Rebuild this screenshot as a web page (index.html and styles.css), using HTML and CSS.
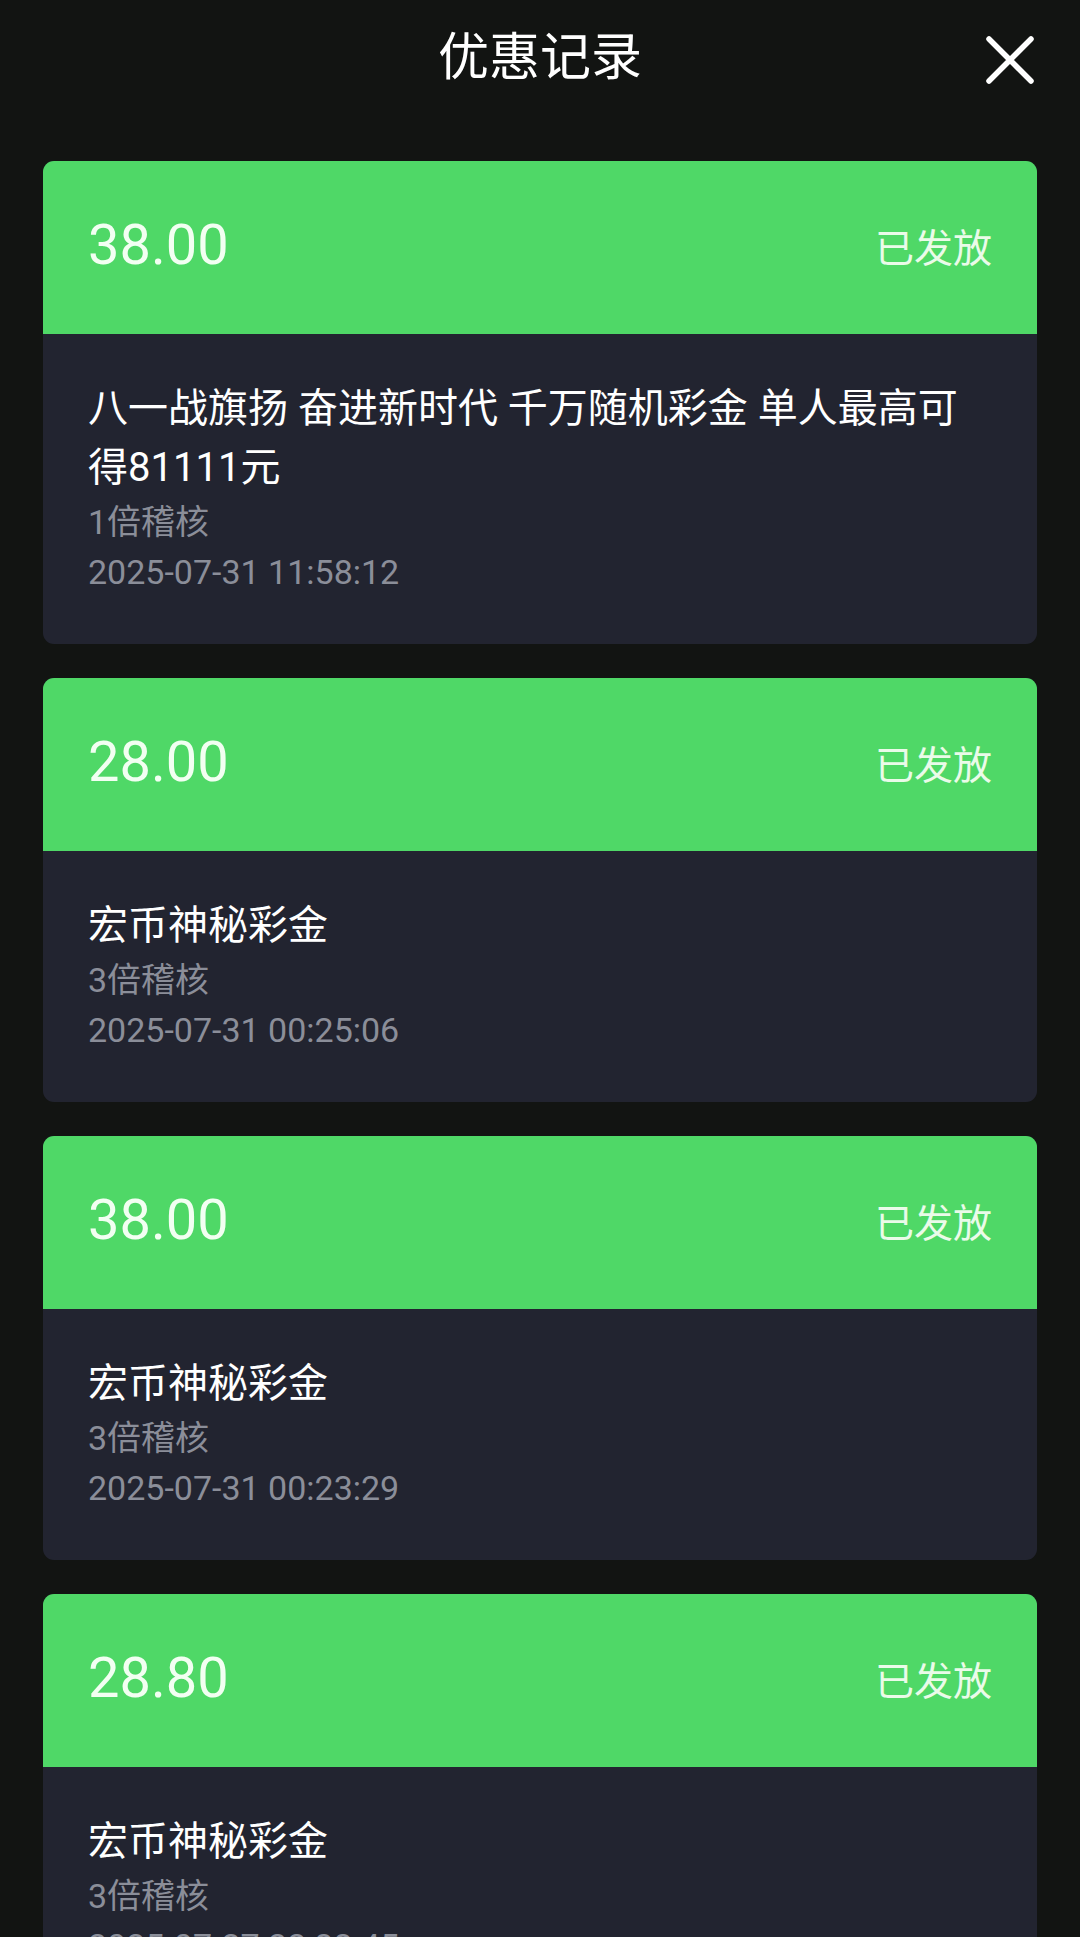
FILE: index.html
```html
<!DOCTYPE html>
<html lang="zh-CN">
<head>
  <meta charset="UTF-8">
  <meta name="viewport" content="width=device-width, initial-scale=1.0">
  <title>优惠记录</title>
  <link rel="stylesheet" href="styles.css">
</head>
<body>
  <!-- 顶部标题栏 -->
  <header class="topbar">
    <h1>优惠记录</h1>
    <button class="close-btn" aria-label="关闭">
      <svg width="48" height="48" viewBox="0 0 48 48">
        <path d="M3 3 L45 45 M45 3 L3 45" stroke="#fff" stroke-width="5.5" stroke-linecap="round" fill="none"/>
      </svg>
    </button>
  </header>

  <!-- 记录列表 -->
  <main class="record-list">
    <div class="record">
      <div class="record-head">
        <span class="amount">38.00</span>
        <span class="status">已发放</span>
      </div>
      <div class="record-body">
        <p class="name">八一战旗扬 奋进新时代 千万随机彩金 单人最高可得81111元</p>
        <p class="meta">1倍稽核</p>
        <p class="meta">2025-07-31 11:58:12</p>
      </div>
    </div>

    <div class="record">
      <div class="record-head">
        <span class="amount">28.00</span>
        <span class="status">已发放</span>
      </div>
      <div class="record-body">
        <p class="name">宏币神秘彩金</p>
        <p class="meta">3倍稽核</p>
        <p class="meta">2025-07-31 00:25:06</p>
      </div>
    </div>

    <div class="record">
      <div class="record-head">
        <span class="amount">38.00</span>
        <span class="status">已发放</span>
      </div>
      <div class="record-body">
        <p class="name">宏币神秘彩金</p>
        <p class="meta">3倍稽核</p>
        <p class="meta">2025-07-31 00:23:29</p>
      </div>
    </div>

    <div class="record">
      <div class="record-head">
        <span class="amount">28.80</span>
        <span class="status">已发放</span>
      </div>
      <div class="record-body">
        <p class="name">宏币神秘彩金</p>
        <p class="meta">3倍稽核</p>
        <p class="meta">2025-07-27 22:33:45</p>
      </div>
    </div>
  </main>
</body>
</html>
```

FILE: styles.css
```css
body {
  margin: 0;
  padding: 0;
  background-color: #121412;
  color: #fff;
  font-family: 'Roboto', 'Noto Sans CJK SC', sans-serif;
  overflow: hidden;
}
.topbar {
  position: relative;
  height: 118px;
  display: flex;
  align-items: center;
  justify-content: center;
}
.topbar h1 {
  margin: -3px 0 0;
  font-size: 51px;
  font-weight: 400;
  line-height: 1;
  color: #fff;
}
.close-btn {
  position: absolute;
  right: 46px;
  top: 36px;
  padding: 0;
  border: none;
  background: none;
  width: 48px;
  height: 48px;
  cursor: pointer;
}
.close-btn svg {
  display: block;
}
.record-list {
  padding: 43px 43px 0;
  display: flex;
  flex-direction: column;
  gap: 34px;
}
.record {
  border-radius: 11px;
  overflow: hidden;
  background-color: #222430;
}
.record-head {
  height: 173px;
  padding: 0 45px;
  background-color: #4fd867;
  display: flex;
  align-items: center;
  justify-content: space-between;
}
.amount {
  font-size: 56px;
  color: #f2fff2;
  margin-top: -5px;
}
.status {
  font-size: 39px;
  color: #eafbe9;
  margin-top: -6px;
}
.record-body {
  padding: 45px 45px 47px;
}
.record-body p {
  margin: 0;
}
.name {
  font-size: 40px;
  line-height: 59px;
  color: #fff;
}
.meta {
  font-size: 34px;
  line-height: 50px;
  color: #8b8e99;
}
```
